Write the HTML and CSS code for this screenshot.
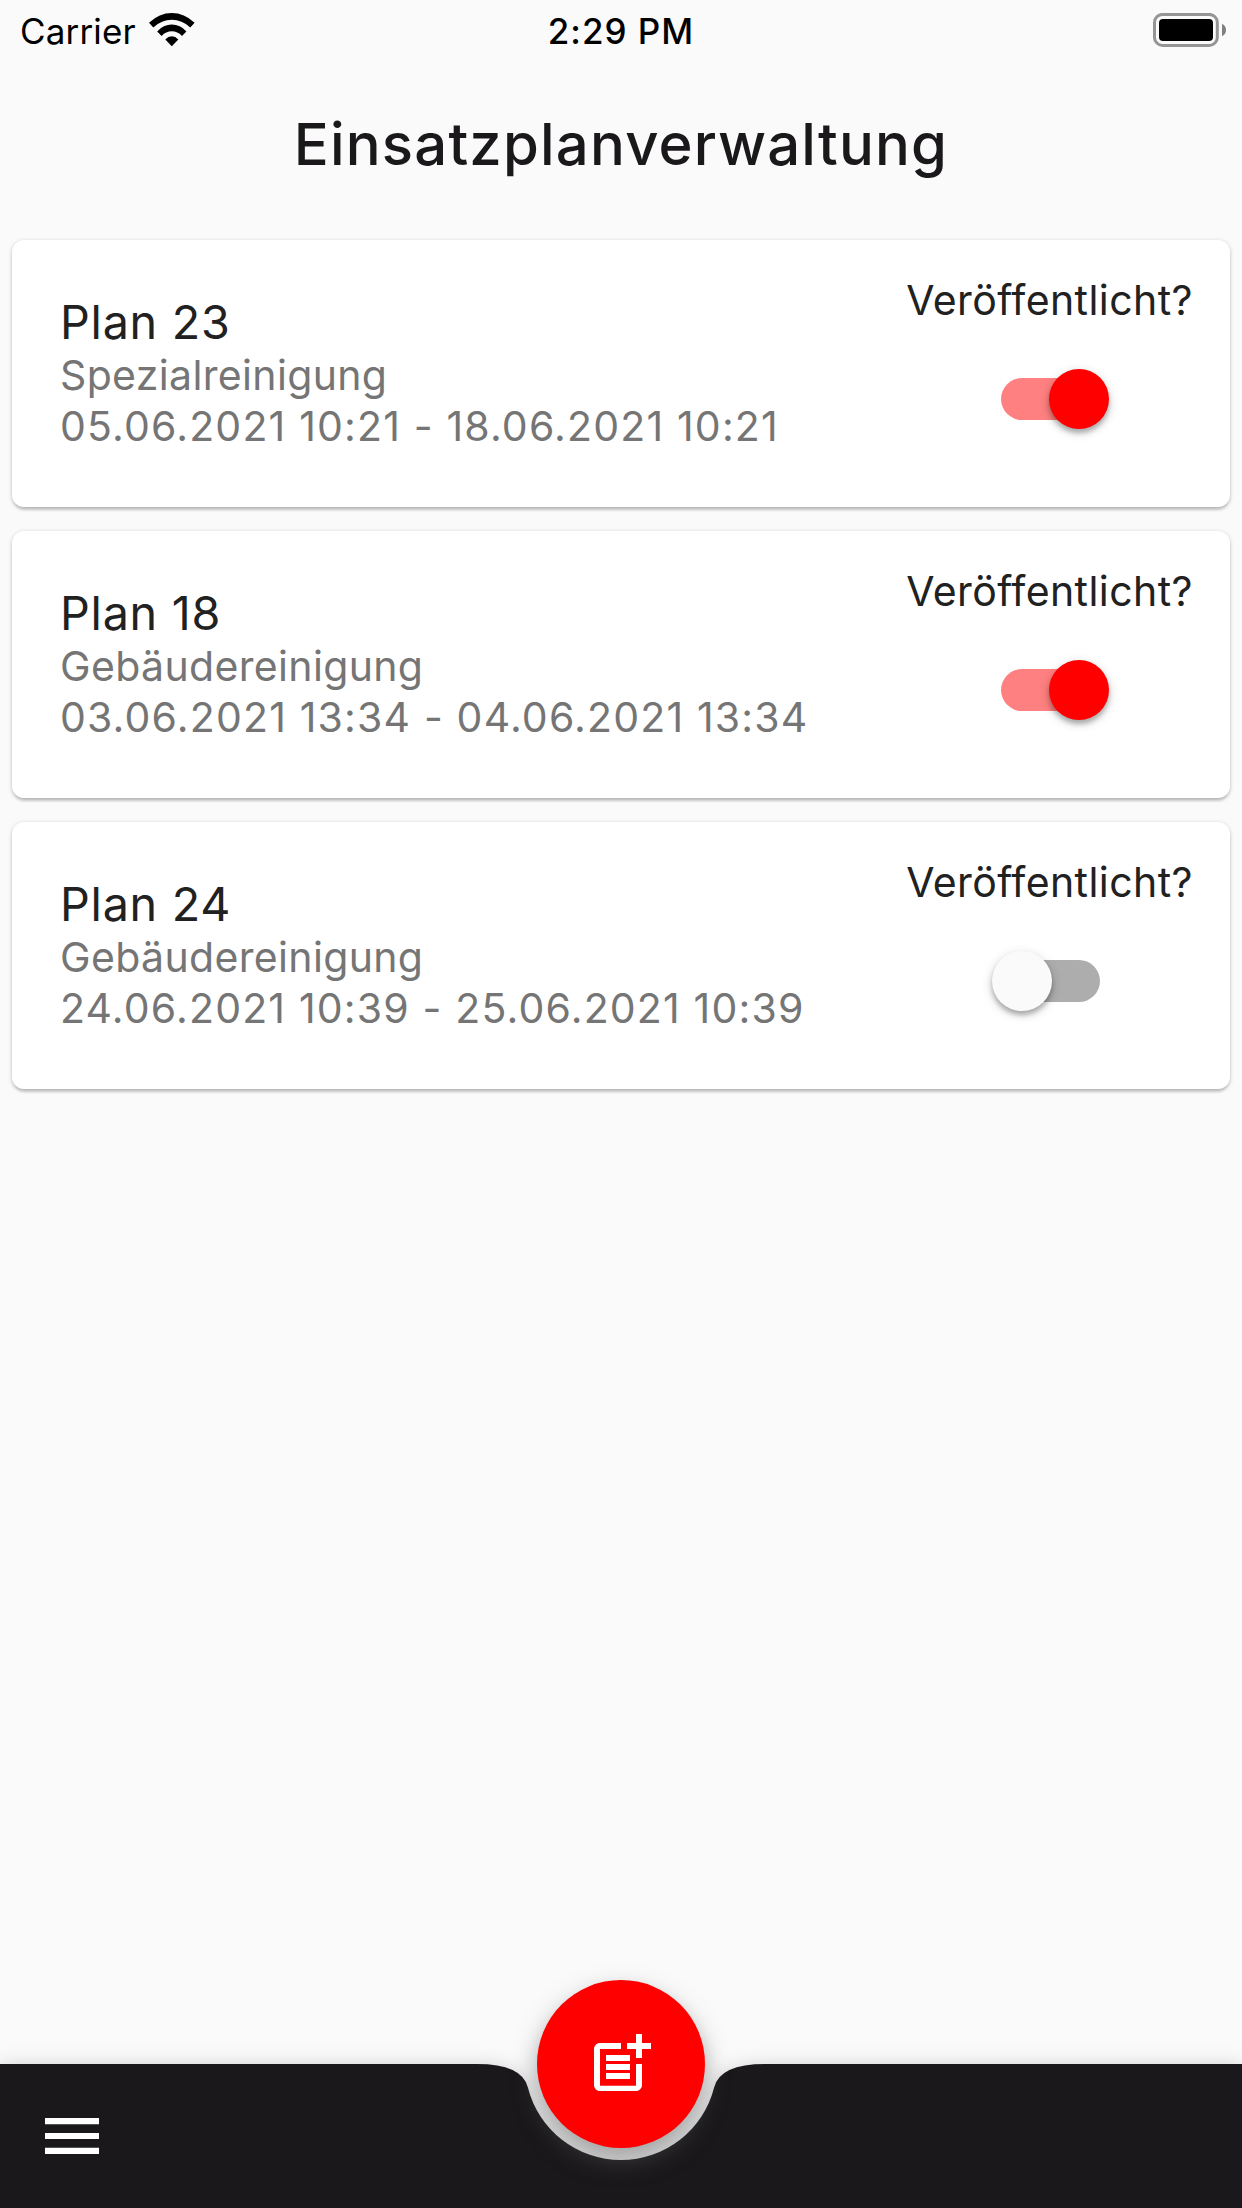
FILE: index.html
```html
<!DOCTYPE html>
<html lang="de">
<head>
<meta charset="utf-8">
<title>Einsatzplanverwaltung</title>
<link rel="stylesheet" href="styles.css">
</head>
<body>
<div class="screen">
  <header class="status">
    <div class="status-left">
      <span class="carrier">Carrier</span>
      <svg class="wifi" width="46" height="34" viewBox="0 0 46 34">
        <path d="M0 9.7Q10.3 0 22.8 0T45.6 9.7L41.3 14.5Q33 6.8 22.8 6.8T4.3 14.5Z"/>
        <path d="M8.2 18.4Q14.4 11.6 22.8 11.6T37.4 18.4L33 22.9Q28.6 18.3 22.8 18.3T12.6 22.9Z"/>
        <path d="M16.3 26.5Q19.2 23.3 22.8 23.3T29.3 26.5L22.8 33.2Z"/>
      </svg>
    </div>
    <span class="time">2:29 PM</span>
    <svg class="battery" width="74" height="34" viewBox="0 0 74 34">
      <rect class="battery-case" x="1.5" y="1.4" width="62.8" height="31" rx="8"/>
      <rect x="6" y="6" width="54" height="22" rx="4"/>
      <path class="battery-cap" d="M69 10.7Q73 12.8 73 17T69 23.3Z"/>
    </svg>
  </header>
  <h1 class="title">Einsatzplanverwaltung</h1>
  <main class="plans">
    <article class="card">
      <div class="info">
        <h2 class="name">Plan 23</h2>
        <p class="detail">Spezialreinigung</p>
        <p class="detail dates">05.06.2021 10:21 - 18.06.2021 10:21</p>
      </div>
      <div class="publish">
        <span class="label">Veröffentlicht?</span>
        <div class="switch on"><span class="thumb"></span></div>
      </div>
    </article>
    <article class="card">
      <div class="info">
        <h2 class="name">Plan 18</h2>
        <p class="detail">Gebäudereinigung</p>
        <p class="detail dates">03.06.2021 13:34 - 04.06.2021 13:34</p>
      </div>
      <div class="publish">
        <span class="label">Veröffentlicht?</span>
        <div class="switch on"><span class="thumb"></span></div>
      </div>
    </article>
    <article class="card">
      <div class="info">
        <h2 class="name">Plan 24</h2>
        <p class="detail">Gebäudereinigung</p>
        <p class="detail dates">24.06.2021 10:39 - 25.06.2021 10:39</p>
      </div>
      <div class="publish">
        <span class="label">Veröffentlicht?</span>
        <div class="switch"><span class="thumb"></span></div>
      </div>
    </article>
  </main>
  <footer class="bar">
    <svg class="bar-shape" width="1242" height="144" viewBox="0 0 1242 144">
      <path class="bar-fill" d="M0 0H477Q522 0 527.91 23.45A96 96 0 0 0 714.09 23.45Q720 0 765 0H1242V144H0Z"/>
    </svg>
    <svg class="menu" width="72" height="72" viewBox="0 0 24 24"><path d="M3 18h18v-2.1H3zM3 13h18v-2H3zM3 6v2.1h18V6z"/></svg>
    <div class="fab">
      <svg width="72" height="72" viewBox="0 0 24 24"><path d="M17 19.22H5V7h7V5H5c-1.1 0-2 .9-2 2v12c0 1.1.9 2 2 2h12c1.1 0 2-.9 2-2v-7h-2zM19 2h-2v3h-3v2h3v3h2V7h3V5h-3zM7 9h8v2H7zM7 12h8v2H7zM7 15h8v2H7z"/></svg>
    </div>
  </footer>
</div>
</body>
</html>
```
FILE: styles.css
```css
* { box-sizing: border-box; margin: 0; }
body { background: #fafafa; font-family: Inter, "Liberation Sans", sans-serif; font-weight: 400; color: #212121; }
svg { display: block; }
.screen { width: 1242px; height: 2208px; display: flex; flex-direction: column; overflow: hidden; }
.status { height: 60px; padding: 0 15px; display: grid; grid-template-columns: 1fr auto 1fr; align-items: start; color: #000; font-size: 35px; line-height: 42px; }
.status-left { display: flex; gap: 13px; padding-left: 5px; }
.carrier { padding-top: 10px; letter-spacing: .15px; }
.wifi { margin-top: 13px; }
.time { padding-top: 10px; font-weight: 500; letter-spacing: 1px; }
.battery { margin-top: 13px; justify-self: end; }
.battery-case { fill: none; stroke: #959595; stroke-width: 3; }
.battery-cap { fill: #808080; }
.title { height: 180px; padding-top: 48px; text-align: center; font-size: 58px; line-height: 72px; font-weight: 500; letter-spacing: 1.2px; color: #1a181b; }
.plans { flex: 1; display: flex; flex-direction: column; gap: 24px; padding: 0 12px; }
.card { height: 267px; padding: 35px 37px 0 48px; display: flex; justify-content: space-between; background: #fff; border-radius: 12px; box-shadow: 0 6px 3px -3px rgba(0,0,0,.08), 0 3px 3px rgba(0,0,0,.08), 0 1px 4px rgba(0,0,0,.2); }
.info { padding-top: 19px; }
.name { font-size: 46.7px; line-height: 56px; font-weight: 400; letter-spacing: .75px; }
.detail { font-size: 41px; line-height: 51px; letter-spacing: .35px; color: #757575; white-space: nowrap; }
.dates { letter-spacing: 1.17px; }
.publish { display: flex; flex-direction: column; align-items: center; width: 287px; }
.label { font-size: 41px; line-height: 50px; letter-spacing: .42px; white-space: nowrap; }
.switch { width: 99px; height: 42px; margin: 53px 0 0 1px; border-radius: 21px; background: #adadad; display: flex; align-items: center; }
.thumb { flex: none; width: 60px; height: 60px; margin-left: -9px; border-radius: 50%; background: #fafafa; box-shadow: 0 4px 5px rgba(0,0,0,.26), 0 3px 12px rgba(0,0,0,.16); }
.switch.on { background: #ff8080; justify-content: flex-end; }
.switch.on .thumb { margin: 0 -9px 0 0; background: #f00; }
.bar { position: relative; height: 144px; }
.bar-shape { overflow: visible; }
.bar-fill { fill: #1a181b; filter: drop-shadow(0 3px 10px rgba(0,0,0,.2)); }
.menu { position: absolute; left: 36px; top: 36px; fill: #fff; }
.fab { position: absolute; left: 537px; top: -84px; width: 168px; height: 168px; border-radius: 50%; background: #f00; display: flex; align-items: center; justify-content: center; box-shadow: 0 12px 24px rgba(88,88,88,.56); }
.fab svg { fill: #fff; }
```
